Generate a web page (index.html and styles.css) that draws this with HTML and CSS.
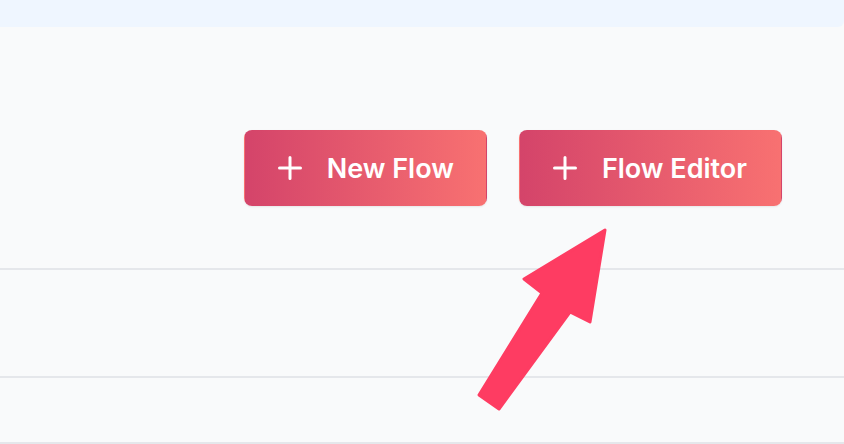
FILE: index.html
```html
<!DOCTYPE html>
<html>
<head>
<meta charset="utf-8">
<link rel="stylesheet" href="styles.css">
</head>
<body>
<div class="topbar"></div>
<main class="main">
  <div class="actions">
    <button class="btn btn-new">
      <svg class="plus" viewBox="0 0 24 24" width="24" height="24"><path d="M12 1.5v21M1.5 12h21" stroke="#fff" stroke-width="3" stroke-linecap="round" fill="none"/></svg>
      <span>New Flow</span>
    </button>
    <button class="btn btn-editor">
      <svg class="plus" viewBox="0 0 24 24" width="24" height="24"><path d="M12 1.5v21M1.5 12h21" stroke="#fff" stroke-width="3" stroke-linecap="round" fill="none"/></svg>
      <span>Flow Editor</span>
    </button>
  </div>
  <div class="row first"></div>
  <div class="row last"></div>
  <svg class="arrow" width="844" height="444" viewBox="0 0 844 444">
    <polygon points="605,230 590,322 570,312 499,409 479,395 542,293 524,279" fill="#fe3c62" stroke="#fe3c62" stroke-width="3" stroke-linejoin="round"/>
  </svg>
</main>
</body>
</html>
```

FILE: styles.css
```css
* { box-sizing: border-box; }
html, body { margin: 0; padding: 0; }
body {
  width: 844px;
  height: 444px;
  overflow: hidden;
  background: #f9fafb;
  font-family: Inter, "Noto Sans", sans-serif;
  position: relative;
}
.topbar {
  height: 27px;
  background: #eff6ff;
  border-bottom-right-radius: 6px;
}
.main {
  display: flex;
  flex-direction: column;
}
.actions {
  display: flex;
  justify-content: flex-end;
  gap: 32px;
  padding: 103px 62px 0 0;
  height: 241px;
}
.btn {
  display: flex;
  align-items: center;
  gap: 25px;
  height: 76px;
  padding: 0 33px 0 33px;
  border: 1px solid transparent;
  border-radius: 8px;
  background: linear-gradient(to right, #d4446a, #f87171);
  box-shadow: 0 1px 2px rgba(0,0,0,0.08);
  color: #fff;
  font-family: Inter, "Noto Sans", sans-serif;
  font-weight: 600;
  font-size: 27px;
  cursor: pointer;
}
.btn-new { padding-right: 32px; }
.btn-editor { padding-right: 34px; }
.plus { flex: none; }
.row {
  border-top: 2px solid #e5e7eb;
}
.row.first { height: 108px; }
.row.last { height: 68px; border-bottom: 2px solid #e5e7eb; }
.arrow {
  position: absolute;
  left: 0;
  top: 0;
  pointer-events: none;
}
```
